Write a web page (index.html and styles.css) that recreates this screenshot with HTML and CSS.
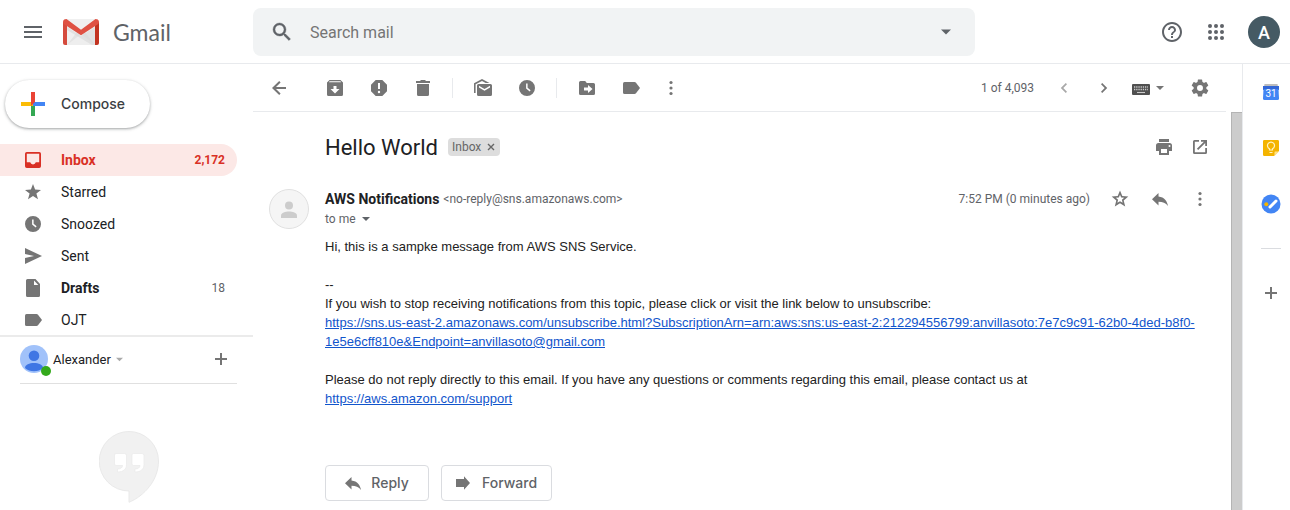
FILE: index.html
```html
<!DOCTYPE html>
<html lang="en">
<head>
<meta charset="utf-8">
<meta name="viewport" content="width=device-width, initial-scale=1">
<title>Hello World - Gmail</title>
<link rel="stylesheet" href="styles.css">
</head>
<body>
<svg class="sprite" aria-hidden="true">
  <symbol id="i-label" viewBox="0 0 20 20"><path d="M3.500 4h10c.6 0 1.100.3 1.500.8L19 10l-4 5.200c-.4.5-.9.8-1.500.8h-10A1.500 1.500 0 0 1 2 14.500v-9A1.500 1.500 0 0 1 3.500 4z"/></symbol>
  <symbol id="i-clock" viewBox="0 0 20 20"><path fill-rule="evenodd" d="M10 2a8 8 0 1 0 0 16 8 8 0 0 0 0-16zM9.100 5.500h1.500v4.300l3 2.400-.9 1.200-3.600-2.800z"/></symbol>
  <symbol id="i-more" viewBox="0 0 20 20"><circle cx="10" cy="4.500" r="1.600"/><circle cx="10" cy="10" r="1.600"/><circle cx="10" cy="15.500" r="1.600"/></symbol>
  <symbol id="i-reply" viewBox="0 0 20 20"><path d="M8.500 7.500V4L2 10.300l6.500 6.200v-3.700c4.200 0 7.300 1 9.500 4.200-.8-4.700-3.500-8.800-9.500-9.500z"/></symbol>
  <symbol id="i-plus" viewBox="0 0 20 20"><path d="M9 4h2v5h5v2h-5v5H9v-5H4V9h5z"/></symbol>
  <symbol id="i-drop" viewBox="0 0 10 10"><path d="M0 2.500h10L5 7.500z"/></symbol>
</svg>

<header class="topbar">
  <div class="brand">
    <button class="icon-btn dark" aria-label="Main menu"><svg class="ico" viewBox="0 0 20 20"><path d="M1 4h18v2H1zM1 9h18v2H1zM1 14h18v2H1z"/></svg></button>
    <a class="logo" href="#">
      <svg class="logo-mark" viewBox="0 0 36 26" aria-hidden="true">
        <rect x="2" width="32" height="26" fill="#f0f0f0"/>
        <path d="M4 26 14 13l4 4 4-4 10 13z" fill="#e3e3e3"/>
        <path d="M4 26l14-11 14 11z" fill="#eee"/>
        <path d="M4 8l14 9L32 8v18h-3L4 11z" fill="#d9d9d9" opacity=".6"/>
        <path d="M0 2.500V24a2 2 0 0 0 2 2h2V6z" fill="#d54b3d"/>
        <path d="M36 2.500V24a2 2 0 0 1-2 2h-2V6z" fill="#c23321"/>
        <path d="M0 3C0 .6 2 0 3.500 0L18 10.700 32.500 0C34 0 36 .6 36 3c0 1.200-.6 1.800-1.500 2.500L18 16.200 1.500 5.500C.6 4.800 0 4.200 0 3z" fill="#df5143"/>
      </svg>
      <span>Gmail</span>
    </a>
  </div>
  <form class="search" role="search">
    <button class="icon-btn dark" type="button" aria-label="Search"><svg class="ico-24" viewBox="0 0 24 24"><path stroke="currentColor" stroke-width=".4" d="M15.500 14h-.79l-.28-.27A6.471 6.471 0 0 0 16 9.500 6.500 6.500 0 1 0 9.500 16c1.610 0 3.090-.59 4.230-1.570l.27.28v.79l5 4.990L20.490 19l-4.990-5zm-6 0C7.010 14 5 11.990 5 9.500S7.010 5 9.500 5 14 7.010 14 9.500 11.990 14 9.500 14z"/></svg></button>
    <input type="text" placeholder="Search mail" aria-label="Search mail">
    <button class="icon-btn dark" type="button" aria-label="Search options"><svg class="drop-lg"><use href="#i-drop"/></svg></button>
  </form>
  <div class="account">
    <button class="icon-btn dark" aria-label="Support"><svg class="ico-24" viewBox="0 0 24 24"><path d="M11 18h2v-2h-2v2zm1-16C6.480 2 2 6.480 2 12s4.480 10 10 10 10-4.480 10-10S17.520 2 12 2zm0 18c-4.410 0-8-3.590-8-8s3.590-8 8-8 8 3.590 8 8-3.590 8-8 8zm0-14c-2.210 0-4 1.790-4 4h2c0-1.100.9-2 2-2s2 .9 2 2c0 2-3 1.750-3 5h2c0-2.250 3-2.500 3-5 0-2.210-1.790-4-4-4z"/></svg></button>
    <button class="icon-btn dark" aria-label="Google apps"><svg class="ico-24" viewBox="0 0 24 24"><circle cx="6" cy="6" r="2"/><circle cx="12" cy="6" r="2"/><circle cx="18" cy="6" r="2"/><circle cx="6" cy="12" r="2"/><circle cx="12" cy="12" r="2"/><circle cx="18" cy="12" r="2"/><circle cx="6" cy="18" r="2"/><circle cx="12" cy="18" r="2"/><circle cx="18" cy="18" r="2"/></svg></button>
    <button class="avatar" aria-label="Google Account">A</button>
  </div>
</header>

<div class="shell">
  <aside class="sidebar">
    <button class="compose">
      <svg class="compose-plus" viewBox="0 0 36 36" aria-hidden="true"><path fill="#34a853" d="M16 18h4v12h-4z"/><path fill="#4285f4" d="M18 16h12v4H18z"/><path fill="#fbbc05" d="M6 16h12v4H6z"/><path fill="#ea4335" d="M16 6h4v10l-4 4z"/></svg>
      Compose
    </button>
    <nav class="folders">
      <a class="folder active" href="#"><svg class="ico" viewBox="0 0 20 20"><path fill-rule="evenodd" d="M3.800 2h12.400A1.800 1.800 0 0 1 18 3.800v12.400a1.800 1.800 0 0 1-1.800 1.800H3.800A1.800 1.800 0 0 1 2 16.200V3.800A1.800 1.800 0 0 1 3.800 2zm0 1.800v8.500h3.400a2.900 2.900 0 0 0 5.600 0h3.400V3.800z"/></svg><span class="name">Inbox</span><span class="count">2,172</span></a>
      <a class="folder" href="#"><svg class="ico" viewBox="0 0 20 20"><path d="M10 2l2.100 5.500 5.900.4-4.600 3.700L15 17.300l-5-3.200-5 3.200 1.600-5.700L2 7.900l5.900-.4z"/></svg><span class="name">Starred</span></a>
      <a class="folder" href="#"><svg class="ico"><use href="#i-clock"/></svg><span class="name">Snoozed</span></a>
      <a class="folder" href="#"><svg class="ico" viewBox="0 0 20 20"><path d="M2 2l17 8-17 8v-6l9-2-9-2z"/></svg><span class="name">Sent</span></a>
      <a class="folder unread" href="#"><svg class="ico" viewBox="0 0 20 20"><path fill-rule="evenodd" d="M4.500 1h8L17 6v11.500a1.500 1.500 0 0 1-1.500 1.500h-11A1.500 1.500 0 0 1 3 17.500v-15A1.500 1.500 0 0 1 4.500 1zM11 2.500V7h4.300z"/></svg><span class="name">Drafts</span><span class="count">18</span></a>
      <a class="folder" href="#"><svg class="ico"><use href="#i-label"/></svg><span class="name">OJT</span></a>
    </nav>
    <section class="chat">
      <div class="chat-head">
        <span class="chat-avatar">
          <svg viewBox="0 0 28 28" aria-hidden="true"><circle cx="14" cy="14" r="14" fill="#a1c2fa"/><circle cx="14" cy="10.700" r="5.300" fill="#3f76e4"/><path d="M5 23c0-3.500 4.500-5 9-5s9 1.500 9 5a14 14 0 0 1-18 0z" fill="#3f76e4"/></svg>
          <span class="presence"></span>
        </span>
        <button class="chat-name">Alexander <svg class="drop-sm"><use href="#i-drop"/></svg></button>
        <button class="icon-btn" aria-label="New conversation"><svg class="ico"><use href="#i-plus"/></svg></button>
      </div>
      <svg class="hangouts" viewBox="0 0 60 72" aria-hidden="true"><path d="M30 .5a29.500 29.500 0 0 0 0 59.500v11.300C45 65 59.500 49.500 59.500 30A29.500 29.500 0 0 0 30 .5z" fill="#f1f1f1" stroke="#e9e9e9"/><path d="M17 22.500h8.500a2 2 0 0 1 2 2v9c0 4.500-3 7.500-9 7.500v-3c3 0 5-1.200 5-3.500H17a1.500 1.500 0 0 1-1.500-1.500v-9a1.500 1.500 0 0 1 1.500-1.500zM34.500 22.500H43a2 2 0 0 1 2 2v9c0 4.500-3 7.500-9 7.500v-3c3 0 5-1.200 5-3.500h-6.500A1.500 1.500 0 0 1 33 33v-9a1.500 1.500 0 0 1 1.500-1.500z" fill="#fff" stroke="#e9e9e9" stroke-width=".7"/></svg>
    </section>
  </aside>

  <main class="main">
    <div class="toolbar" role="toolbar" aria-label="Message actions">
      <button class="icon-btn back" aria-label="Back to Inbox"><svg class="ico" viewBox="0 0 20 20"><path d="M17 9v2H7l4.600 4.600-1.400 1.400L3 10l7.200-7 1.400 1.400L7 9z"/></svg></button>
      <button class="icon-btn" aria-label="Archive"><svg class="ico" viewBox="0 0 20 20"><path fill-rule="evenodd" d="M4.500 2h11L18 4.500v12a1.500 1.500 0 0 1-1.500 1.500h-13A1.500 1.500 0 0 1 2 16.500v-12zM4.500 3.300l-.5.900h12l-.5-.9zM8.500 8v3H5.500l4.500 4.500 4.500-4.500h-3V8z"/></svg></button>
      <button class="icon-btn" aria-label="Report spam"><svg class="ico" viewBox="0 0 20 20"><path fill-rule="evenodd" d="M6.700 2h6.600L18 6.700v6.600L13.300 18H6.700L2 13.300V6.700zM9 5v6h2V5zm1 7.800a1.200 1.200 0 1 0 0 2.400 1.200 1.200 0 0 0 0-2.400z"/></svg></button>
      <button class="icon-btn" aria-label="Delete"><svg class="ico" viewBox="0 0 20 20"><path d="M3 3h4l1-1h4l1 1h4v2H3zM4 6h12v10.500a1.500 1.500 0 0 1-1.500 1.500h-9A1.500 1.500 0 0 1 4 16.500z"/></svg></button>
      <span class="sep"></span>
      <button class="icon-btn" aria-label="Mark as unread"><svg class="ico" viewBox="0 0 20 20"><path d="M1 15V5.200L9 1l7.500 4h-3.800L9 3 2.600 6.300V15z"/><path fill-rule="evenodd" d="M5.500 6h12A1.500 1.500 0 0 1 19 7.500v9a1.500 1.500 0 0 1-1.500 1.500h-12A1.500 1.500 0 0 1 4 16.500v-9A1.500 1.500 0 0 1 5.500 6zM6 7.800v1.700l5.500 3.300L17 9.500V7.800l-5.500 3.300z"/></svg></button>
      <button class="icon-btn" aria-label="Snooze"><svg class="ico"><use href="#i-clock"/></svg></button>
      <span class="sep"></span>
      <button class="icon-btn" aria-label="Move to"><svg class="ico" viewBox="0 0 20 20"><path fill-rule="evenodd" d="M3.500 3h4.700l1.600 2h6.700A1.500 1.500 0 0 1 18 6.500v9a1.500 1.500 0 0 1-1.500 1.500h-13A1.500 1.500 0 0 1 2 15.500v-11A1.500 1.500 0 0 1 3.500 3zM11 7v2.500H7v3h4V15l4.500-4z"/></svg></button>
      <button class="icon-btn" aria-label="Labels"><svg class="ico"><use href="#i-label"/></svg></button>
      <button class="icon-btn narrow" aria-label="More"><svg class="ico"><use href="#i-more"/></svg></button>
      <span class="pager">1 of 4,093</span>
      <button class="icon-btn step faint" aria-label="Newer"><svg class="ico" viewBox="0 0 20 20"><path d="M11.800 5l1.200 1.200L9.300 10l3.700 3.800-1.200 1.200-5-5z"/></svg></button>
      <button class="icon-btn step" aria-label="Older"><svg class="ico" viewBox="0 0 20 20"><path d="M8.200 5L7 6.200l3.700 3.800L7 13.800 8.200 15l5-5z"/></svg></button>
      <button class="keyboard" aria-label="Input tools"><svg class="keys" viewBox="0 0 18 14"><rect y="3" width="18" height="11" rx="1" fill="#505050"/><path d="M2 6h14M2 8.500h14" stroke="#ccc" stroke-width="1.300" stroke-dasharray="1.300 .9"/><path d="M5 11.500h8" stroke="#ccc" stroke-width="1.100"/></svg><svg class="drop-md"><use href="#i-drop"/></svg></button>
      <button class="icon-btn" aria-label="Settings"><svg class="ico" viewBox="2 2 20 20"><path d="M19.430 12.980c.04-.32.07-.64.07-.98s-.03-.66-.07-.98l2.110-1.650c.19-.15.24-.42.12-.64l-2-3.460c-.12-.22-.39-.3-.61-.22l-2.490 1c-.52-.4-1.080-.73-1.690-.98l-.38-2.650A.488.488 0 0 0 14 2h-4c-.25 0-.46.18-.49.42l-.38 2.650c-.61.25-1.170.59-1.690.98l-2.490-1c-.23-.09-.49 0-.61.22l-2 3.460c-.13.22-.07.49.12.64l2.110 1.650c-.04.32-.07.65-.07.98s.03.66.07.98l-2.110 1.650c-.19.15-.24.42-.12.64l2 3.460c.12.22.39.3.61.22l2.490-1c.52.4 1.080.73 1.690.98l.38 2.650c.03.24.24.42.49.42h4c.25 0 .46-.18.49-.42l.38-2.650c.61-.25 1.170-.59 1.690-.98l2.490 1c.23.09.49 0 .61-.22l2-3.460c.12-.22.07-.49-.12-.64zM12 15.500a3.500 3.500 0 1 1 0-7 3.500 3.500 0 0 1 0 7z" transform="translate(1.800 1.800) scale(.85)"/></svg></button>
    </div>

    <div class="scroll">
      <article class="mail">
        <div class="subject-row">
          <h1>Hello World</h1>
          <span class="chip">Inbox <button aria-label="Remove label Inbox"><svg viewBox="0 0 8 8"><path d="M1 1l6 6M7 1L1 7" stroke="#666" stroke-width="1.400"/></svg></button></span>
          <span class="tools">
            <button class="icon-btn slim" aria-label="Print all"><svg class="ico" viewBox="0 0 20 20"><path fill-rule="evenodd" d="M5 2h10v3H5zM4.500 6h11A2.500 2.500 0 0 1 18 8.500V14h-3v4H5v-4H2V8.500A2.500 2.500 0 0 1 4.500 6zM7 12v4h6v-4zm8.500-4a1 1 0 1 0 0 2 1 1 0 0 0 0-2z"/></svg></button>
            <button class="icon-btn slim" aria-label="In new window"><svg class="ico" viewBox="0 0 20 20"><path d="M4.500 3H9v1.800H4.800v10.400h10.400V11H17v4.500a1.500 1.500 0 0 1-1.500 1.500h-11A1.500 1.500 0 0 1 3 15.500v-11A1.500 1.500 0 0 1 4.500 3zM11 3h6v6h-1.800V6.100l-7 7-1.300-1.300 7-7H11z"/></svg></button>
          </span>
        </div>

        <svg class="sender-pic" viewBox="0 0 40 40" aria-hidden="true"><circle cx="20" cy="20" r="19.500" fill="#f5f5f5" stroke="#e0e0e0"/><circle cx="20" cy="16.500" r="4" fill="#ccc"/><path d="M12 29v-2.500c0-2.600 4.500-4 8-4s8 1.400 8 4V29z" fill="#ccc"/></svg>
        <div class="sender">
          <div class="from">
            <h2>AWS Notifications</h2>
            <span class="address">&lt;no-reply@sns.amazonaws.com&gt;</span>
          </div>
          <button class="to">to me <svg class="drop-md"><use href="#i-drop"/></svg></button>
        </div>
        <div class="meta">
          <time>7:52 PM (0 minutes ago)</time>
          <button class="icon-btn step" aria-label="Star"><svg class="ico" viewBox="0 0 20 20"><path fill-rule="evenodd" d="M10 1.500l2.300 5.600 6 .5-4.600 3.900 1.500 5.900L10 14.200l-5.200 3.200 1.500-5.900-4.600-3.900 6-.5zm0 4.200L8.800 8.500l-3 .3 2.300 2-.7 3 2.600-1.600 2.600 1.600-.7-3 2.300-2-3-.3z"/></svg></button>
          <button class="icon-btn step" aria-label="Reply"><svg class="ico"><use href="#i-reply"/></svg></button>
          <button class="icon-btn step" aria-label="More options"><svg class="ico"><use href="#i-more"/></svg></button>
        </div>

        <div class="content">
          <p>Hi, this is a sampke message from AWS SNS Service.</p>
          <p>--<br>If you wish to stop receiving notifications from this topic, please click or visit the link below to unsubscribe:<br>
          <a href="#">https://sns.us-east-2.amazonaws.com/unsubscribe.html?SubscriptionArn=arn:aws:sns:us-east-2:212294556799:anvillasoto:7e7c9c91-62b0-4ded-b8f0-<wbr>1e5e6cff810e&amp;Endpoint=anvillasoto@gmail.com</a></p>
          <p>Please do not reply directly to this email. If you have any questions or comments regarding this email, please contact us at <a href="#">https://aws.amazon.com/support</a></p>
        </div>

        <div class="actions">
          <button class="action"><svg class="ico"><use href="#i-reply"/></svg>Reply</button>
          <button class="action"><svg class="ico" viewBox="0 0 20 20"><path d="M2 6h8V3.300L16 10l-6 6.700V14H2z"/></svg>Forward</button>
        </div>
      </article>
      <div class="scrollbar" aria-hidden="true"></div>
    </div>
  </main>

  <aside class="rail" aria-label="Side panel">
    <button class="rail-btn" aria-label="Calendar"><svg class="ico" viewBox="0 0 20 20"><path d="M3.500 2h13L17 5H3z" fill="#bdbdbd"/><path d="M2 4h16v4H2z" fill="#3367d6"/><path d="M2.500 7h15l.5 9.500a1.500 1.500 0 0 1-1.500 1.500h-13A1.500 1.500 0 0 1 2 16.500z" fill="#4285f4"/><text class="cal-day" x="10" y="15" text-anchor="middle">31</text></svg></button>
    <button class="rail-btn" aria-label="Keep"><svg class="ico" viewBox="0 0 20 20"><path d="M3.300 2h13.400A1.300 1.300 0 0 1 18 3.300V13l-5 5H3.300A1.300 1.300 0 0 1 2 16.700V3.300A1.300 1.300 0 0 1 3.300 2z" fill="#f4b400"/><path d="M13.500 18v-3.500c0-.6.400-1 1-1H18z" fill="#ffe28a"/><path d="M8.500 12v-1.300a3.500 3.500 0 1 1 3 0V12zM8.500 14.500h3" fill="none" stroke="#fff3c4" stroke-width="1.200"/></svg></button>
    <button class="rail-btn" aria-label="Tasks"><svg class="ico" viewBox="0 0 20 20"><circle cx="10" cy="10" r="9.500" fill="#4285f4"/><circle cx="5.300" cy="10.300" r="2" fill="#f4b400"/><path d="M9 13l6-6" stroke="#fff" stroke-width="3" stroke-linecap="round"/></svg></button>
    <hr>
    <button class="rail-btn" aria-label="Get add-ons"><svg class="ico"><use href="#i-plus"/></svg></button>
  </aside>
</div>
</body>
</html>
```
FILE: styles.css
```css
* { box-sizing: border-box; }

body {
  margin: 0;
  height: 100vh;
  display: flex;
  flex-direction: column;
  overflow: hidden;
  background: #fff;
  color: #202124;
  font-family: Roboto, "Liberation Sans", sans-serif;
  font-size: 14px;
}

button {
  margin: 0;
  padding: 0;
  border: 0;
  background: none;
  color: inherit;
  font: inherit;
  cursor: pointer;
}

svg { display: block; flex: none; fill: currentColor; }
.sprite { position: absolute; width: 0; height: 0; }

.ico { width: 20px; height: 20px; }
.ico-24 { width: 24px; height: 24px; }
.drop-lg { width: 10px; height: 10px; }
.drop-md { width: 8px; height: 8px; }
.drop-sm { width: 7px; height: 7px; color: #aaa; }

.icon-btn {
  flex: none;
  width: 44px;
  height: 40px;
  display: flex;
  align-items: center;
  justify-content: center;
  color: #757575;
}
.icon-btn.dark { color: #5f6368; }
.icon-btn.step { width: 40px; }
.icon-btn.slim { width: 36px; }
.icon-btn.narrow { width: 36px; }
.icon-btn.faint { color: #a8a8a8; }

/* Top bar */
.topbar {
  flex: none;
  height: 64px;
  display: flex;
  align-items: center;
  border-bottom: 1px solid #e8eaed;
}
.brand {
  flex: none;
  width: 253px;
  padding-left: 11px;
  display: flex;
  align-items: center;
  gap: 8px;
}
.logo {
  display: flex;
  align-items: center;
  gap: 14px;
  color: #5f6368;
  font-family: Lato, sans-serif;
  font-size: 23px;
  text-decoration: none;
}
.logo-mark { width: 36px; height: 26px; }
.search {
  flex: 0 1 722px;
  height: 48px;
  padding: 0 7px;
  display: flex;
  align-items: center;
  border-radius: 8px;
  background: #f1f3f4;
}
.search input {
  flex: 1;
  min-width: 0;
  padding: 2px 0 0 6px;
  border: 0;
  outline: 0;
  background: none;
  font: 16px Roboto, sans-serif;
}
.search input::placeholder { color: #757575; }
.account {
  margin-left: auto;
  padding-right: 10px;
  display: flex;
  align-items: center;
}
.avatar {
  width: 32px;
  height: 32px;
  margin-left: 10px;
  padding-top: 2px;
  border-radius: 50%;
  background: #455a64;
  color: #fff;
  font-size: 18px;
  font-weight: 500;
}

/* Columns */
.shell {
  flex: 1;
  min-height: 0;
  display: grid;
  grid-template-columns: 253px minmax(0, 1fr) 48px;
}

/* Sidebar */
.sidebar { padding-top: 16px; }
.compose {
  height: 48px;
  margin: 0 0 16px 5px;
  padding: 0 25px 1px 10px;
  display: flex;
  align-items: center;
  gap: 10px;
  border-radius: 24px;
  box-shadow: 0 1px 2px rgba(60, 64, 67, .3), 0 1px 3px 1px rgba(60, 64, 67, .15);
  color: #3c4043;
  font-family: Inter, sans-serif;
  font-size: 14px;
  font-weight: 500;
}
.compose-plus { width: 36px; height: 36px; }
.folder {
  height: 32px;
  margin-right: 16px;
  padding: 0 12px 0 23px;
  display: flex;
  align-items: center;
  border-radius: 0 16px 16px 0;
  color: #202124;
  text-decoration: none;
}
.folder .ico { margin-right: 18px; color: #757575; }
.name { flex: 1; }
.count { color: #5f6368; font-size: 12px; }
.active { background: #fce8e6; }
.active, .active .ico, .active .count { color: #d93025; font-weight: 700; }
.unread .name { font-weight: 700; }

.chat { margin-top: -1px; border-top: 2px solid #ebebeb; background: #fff; }
.chat-head {
  height: 47px;
  margin: 0 16px 0 20px;
  padding-bottom: 2px;
  display: flex;
  align-items: center;
  border-bottom: 1px solid #e0e0e0;
}
.chat-head .icon-btn { width: 32px; }
.chat-avatar { position: relative; width: 28px; margin-right: 5px; }
.chat-avatar svg { width: 28px; height: 28px; }
.presence {
  position: absolute;
  right: -3px;
  bottom: -3px;
  width: 10px;
  height: 10px;
  border-radius: 50%;
  background: #34a91c;
}
.chat-name {
  margin-right: auto;
  display: flex;
  align-items: center;
  gap: 5px;
  font-size: 13px;
}
.hangouts { width: 60px; height: 72px; margin: 47px 0 0 99px; }

/* Message pane */
.main { display: flex; flex-direction: column; min-height: 0; }
.toolbar {
  flex: none;
  height: 48px;
  margin-right: 16px;
  padding: 0 4px;
  display: flex;
  align-items: center;
  border-bottom: 1px solid #e8eaed;
}
.back { margin-right: 12px; }
.sep { width: 1px; height: 20px; margin: 0 8px 0 7px; background: #e8eaed; }
.pager { margin: 0 10px 0 auto; color: #5f6368; font-size: 12px; }
.keyboard {
  margin: 0 14px 0 8px;
  display: flex;
  align-items: center;
  gap: 6px;
  color: #757575;
}
.keys { width: 18px; height: 14px; }

.scroll { flex: 1; min-height: 0; display: flex; }
.scrollbar {
  flex: none;
  width: 11px;
  border: solid #b4b4b4;
  border-width: 1px 0 0 1px;
  background: #ccc;
}
.mail {
  flex: 1;
  min-width: 0;
  padding: 15px 11px 0 16px;
  display: grid;
  grid-template-columns: 56px minmax(0, 1fr) auto;
  align-content: start;
}
.subject-row {
  grid-column: 2 / -1;
  height: 40px;
  padding-right: 2px;
  display: flex;
  align-items: center;
  gap: 10px;
}
h1 { margin: 0; font-size: 22px; font-weight: 400; }
.chip {
  height: 18px;
  padding: 0 5px 0 4px;
  display: flex;
  align-items: center;
  gap: 6px;
  border-radius: 4px;
  background: #ddd;
  color: #666;
  font-size: 12px;
}
.chip svg { width: 8px; height: 8px; }
.tools { margin-left: auto; display: flex; }
.sender-pic { width: 40px; height: 40px; margin-top: 22px; }
.sender { margin-top: 22px; }
.from { height: 20px; display: flex; align-items: center; gap: 4px; }
h2 { margin: 0; font-size: 14px; font-weight: 700; }
.address, .to, time { color: #5f6368; font-size: 12px; }
.to { height: 20px; display: flex; align-items: center; gap: 6px; }
.meta { height: 40px; margin-top: 12px; display: flex; align-items: center; }
time { margin-right: 10px; }

.content {
  grid-column: 2 / -1;
  margin-top: 8px;
  padding-right: 16px;
  color: #222;
  font: 13px/19px "Liberation Sans", Arial, sans-serif;
}
.content p { margin: 0 0 19px; }
.content a { color: #15c; }

.actions { grid-column: 2 / -1; margin-top: 38px; display: flex; gap: 12px; }
.action {
  min-width: 104px;
  height: 36px;
  padding: 0 14px 1px 12px;
  display: flex;
  align-items: center;
  justify-content: center;
  gap: 8px;
  border: 1px solid #dadce0;
  border-radius: 4px;
  color: #5f6368;
  font-family: Inter, sans-serif;
  font-size: 14px;
  font-weight: 500;
}
.action svg { color: #757575; }

/* Side panel */
.rail {
  padding-left: 18px;
  display: flex;
  flex-direction: column;
  align-items: flex-start;
  border-left: 1px solid #e8eaed;
  color: #757575;
}
.rail-btn { height: 56px; display: flex; align-items: center; }
.cal-day { fill: #fff; font-size: 10px; }
.rail hr {
  width: 20px;
  height: 1px;
  margin: 16px 0;
  border: 0;
  background: #dadce0;
}
```
